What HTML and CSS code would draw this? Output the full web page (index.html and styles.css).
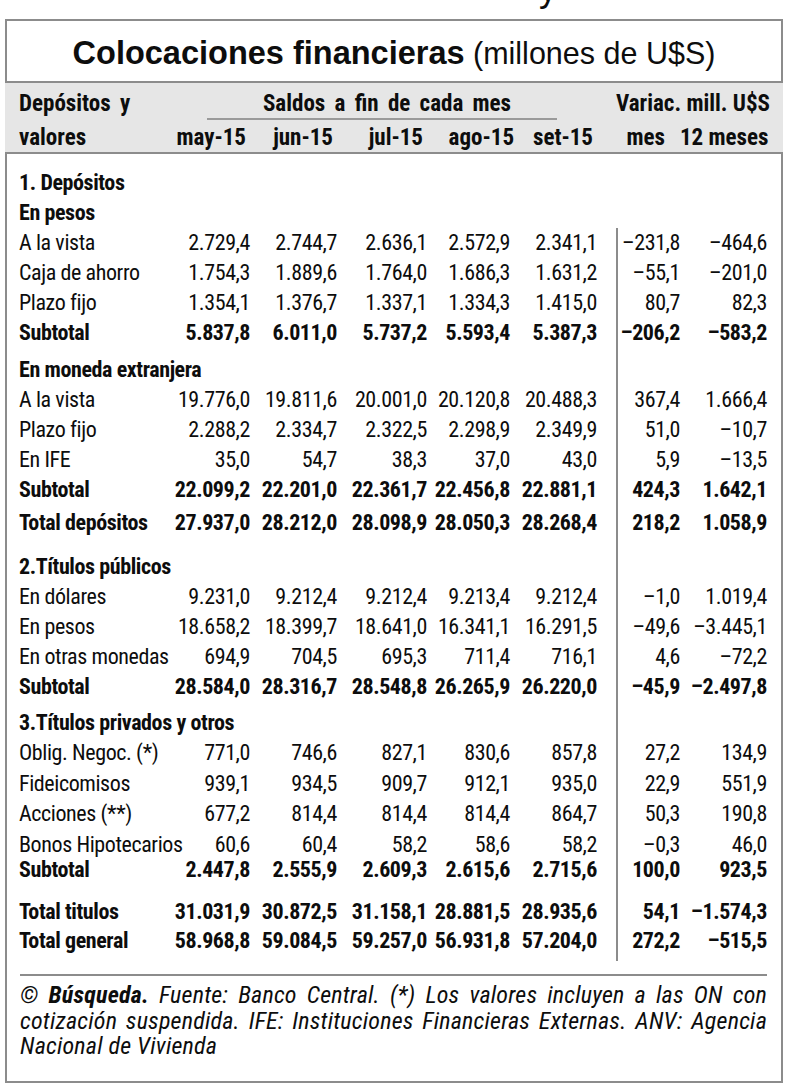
FILE: index.html
```html
<!DOCTYPE html>
<html lang="es">
<head>
  <meta charset="UTF-8">
  <meta name="viewport" content="width=device-width, initial-scale=1.0">
  <title>Colocaciones financieras</title>
  <link rel="stylesheet" href="styles.css">
</head>
<body>
  <div class="scrap"><span>y</span></div>

  <div class="chart">
    <h1 class="title"><b>Colocaciones financieras</b> (millones de U$S)</h1>

    <div class="head">
      <div class="grid top">
        <div class="lbl">Depósitos y</div>
        <div class="saldos"><span>Saldos a fin de cada mes</span></div>
        <div class="variac">Variac. mill. U$S</div>
      </div>
      <div class="grid bottom">
        <div class="lbl">valores</div>
        <div>may-15</div>
        <div>jun-15</div>
        <div>jul-15</div>
        <div class="ago">ago-15</div>
        <div class="v5">set-15</div>
        <div class="h-mes">mes</div>
        <div>12 meses</div>
      </div>
    </div>

    <div class="body">
      <div class="row bold"><div class="lbl full">1. Depósitos</div></div>
      <div class="row bold"><div class="lbl full">En pesos</div></div>
      <div class="row">
        <div class="lbl">A la vista</div><div>2.729,4</div><div>2.744,7</div><div>2.636,1</div><div>2.572,9</div><div class="v5">2.341,1</div><div class="mes">–231,8</div><div>–464,6</div>
      </div>
      <div class="row">
        <div class="lbl">Caja de ahorro</div><div>1.754,3</div><div>1.889,6</div><div>1.764,0</div><div>1.686,3</div><div class="v5">1.631,2</div><div class="mes">–55,1</div><div>–201,0</div>
      </div>
      <div class="row">
        <div class="lbl">Plazo fijo</div><div>1.354,1</div><div>1.376,7</div><div>1.337,1</div><div>1.334,3</div><div class="v5">1.415,0</div><div class="mes">80,7</div><div>82,3</div>
      </div>
      <div class="row bold">
        <div class="lbl">Subtotal</div><div>5.837,8</div><div>6.011,0</div><div>5.737,2</div><div>5.593,4</div><div class="v5">5.387,3</div><div class="mes">–206,2</div><div>–583,2</div>
      </div>

      <div class="row bold sp7"><div class="lbl wide">En moneda extranjera</div><div class="mes rest"></div></div>
      <div class="row">
        <div class="lbl">A la vista</div><div>19.776,0</div><div>19.811,6</div><div>20.001,0</div><div>20.120,8</div><div class="v5">20.488,3</div><div class="mes">367,4</div><div>1.666,4</div>
      </div>
      <div class="row">
        <div class="lbl">Plazo fijo</div><div>2.288,2</div><div>2.334,7</div><div>2.322,5</div><div>2.298,9</div><div class="v5">2.349,9</div><div class="mes">51,0</div><div>–10,7</div>
      </div>
      <div class="row">
        <div class="lbl">En IFE</div><div>35,0</div><div>54,7</div><div>38,3</div><div>37,0</div><div class="v5">43,0</div><div class="mes">5,9</div><div>–13,5</div>
      </div>
      <div class="row bold">
        <div class="lbl">Subtotal</div><div>22.099,2</div><div>22.201,0</div><div>22.361,7</div><div>22.456,8</div><div class="v5">22.881,1</div><div class="mes">424,3</div><div>1.642,1</div>
      </div>
      <div class="row bold sp3">
        <div class="lbl">Total depósitos</div><div>27.937,0</div><div>28.212,0</div><div>28.098,9</div><div>28.050,3</div><div class="v5">28.268,4</div><div class="mes">218,2</div><div>1.058,9</div>
      </div>

      <div class="row bold sp14"><div class="lbl wide">2.Títulos públicos</div><div class="mes rest"></div></div>
      <div class="row">
        <div class="lbl">En dólares</div><div>9.231,0</div><div>9.212,4</div><div>9.212,4</div><div>9.213,4</div><div class="v5">9.212,4</div><div class="mes">–1,0</div><div>1.019,4</div>
      </div>
      <div class="row">
        <div class="lbl">En pesos</div><div>18.658,2</div><div>18.399,7</div><div>18.641,0</div><div>16.341,1</div><div class="v5">16.291,5</div><div class="mes">–49,6</div><div>–3.445,1</div>
      </div>
      <div class="row">
        <div class="lbl">En otras monedas</div><div>694,9</div><div>704,5</div><div>695,3</div><div>711,4</div><div class="v5">716,1</div><div class="mes">4,6</div><div>–72,2</div>
      </div>
      <div class="row bold">
        <div class="lbl">Subtotal</div><div>28.584,0</div><div>28.316,7</div><div>28.548,8</div><div>26.265,9</div><div class="v5">26.220,0</div><div class="mes">–45,9</div><div>–2.497,8</div>
      </div>

      <div class="row bold sp6"><div class="lbl wide">3.Títulos privados y otros</div><div class="mes rest"></div></div>
      <div class="row">
        <div class="lbl">Oblig. Negoc. (*)</div><div>771,0</div><div>746,6</div><div>827,1</div><div>830,6</div><div class="v5">857,8</div><div class="mes">27,2</div><div>134,9</div>
      </div>
      <div class="row sp1">
        <div class="lbl">Fideicomisos</div><div>939,1</div><div>934,5</div><div>909,7</div><div>912,1</div><div class="v5">935,0</div><div class="mes">22,9</div><div>551,9</div>
      </div>
      <div class="row">
        <div class="lbl">Acciones (**)</div><div>677,2</div><div>814,4</div><div>814,4</div><div>814,4</div><div class="v5">864,7</div><div class="mes">50,3</div><div>190,8</div>
      </div>
      <div class="row sp1">
        <div class="lbl">Bonos Hipotecarios</div><div>60,6</div><div>60,4</div><div>58,2</div><div>58,6</div><div class="v5">58,2</div><div class="mes">–0,3</div><div>46,0</div>
      </div>
      <div class="row bold tight">
        <div class="lbl">Subtotal</div><div>2.447,8</div><div>2.555,9</div><div>2.609,3</div><div>2.615,6</div><div class="v5">2.715,6</div><div class="mes">100,0</div><div>923,5</div>
      </div>

      <div class="row bold sp17">
        <div class="lbl">Total titulos</div><div>31.031,9</div><div>30.872,5</div><div>31.158,1</div><div>28.881,5</div><div class="v5">28.935,6</div><div class="mes">54,1</div><div>–1.574,3</div>
      </div>
      <div class="row bold last">
        <div class="lbl">Total general</div><div>58.968,8</div><div>59.084,5</div><div>59.257,0</div><div>56.931,8</div><div class="v5">57.204,0</div><div class="mes">272,2</div><div>–515,5</div>
      </div>

      <div class="note">
        <p class="fill">© <b>Búsqueda.</b> Fuente: Banco Central. (*) Los valores incluyen a las ON con</p>
        <p class="fill">cotización suspendida. IFE: Instituciones Financieras Externas. ANV: Agencia</p>
        <p>Nacional de Vivienda</p>
      </div>
    </div>
  </div>
</body>
</html>
```

FILE: styles.css
```css
* {
  box-sizing: border-box;
}

body {
  margin: 0;
  background: #fff;
  color: #0d0d0d;
  font-family: "Roboto Condensed", "DejaVu Sans Condensed", sans-serif;
}

/* a bit of the line above, cut by the page edge */
.scrap {
  height: 19px;
  overflow: hidden;
  padding-left: 539px;
  font-family: "Liberation Sans", sans-serif;
  font-size: 36px;
  line-height: 36px;
}

.scrap span {
  display: block;
  margin-top: -29px;
}

.chart {
  width: 778px;
  margin-left: 5px;
}

.title {
  margin: 0;
  height: 64px;
  border: 2px solid #8c8c8c;
  padding-top: 4px;
  font-family: "Liberation Sans", sans-serif;
  font-size: 30.5px;
  font-weight: normal;
  line-height: 56px;
  text-align: center;
  white-space: nowrap;
}

.title b {
  font-size: 32.5px;
}

/* grey column header */
.head {
  background: #e6e6e6;
  padding: 6px 4px 0 14px;
  height: 69px;
  font-size: 23px;
  font-weight: bold;
}

.grid,
.row {
  display: grid;
  grid-template-columns: 141px 90px 87px 90px 83px 106px 64px 87px;
}

.grid > div,
.row > div {
  text-align: right;
  white-space: nowrap;
}

.grid > .lbl,
.row > .lbl {
  text-align: left;
}

.grid.top {
  line-height: 29px;
  word-spacing: 4px;
}

.saldos {
  grid-column: 2 / 7;
}

.saldos span {
  display: block;
  width: 350px;
  margin-left: 47px;
  padding-left: 10px;
  text-align: center;
  border-bottom: 2px solid #9a9a9a;
}

.grid.top > .variac {
  grid-column: 7 / 9;
  padding-right: 1px;
  word-spacing: 0;
}

.grid.bottom {
  line-height: 28px;
  padding-top: 4px;
}

.grid.bottom > div {
  padding-right: 4px;
}

.grid.bottom > .lbl {
  padding-right: 0;
}

.grid.bottom > .v5 {
  padding-right: 23px;
}

.grid.bottom > .ago {
  padding-right: 0;
  margin-right: -4px;
}

.grid.bottom > .h-mes {
  padding-right: 15px;
}

/* table body */
.body {
  border: 2px solid #8c8c8c;
  padding: 14px 14px 21px 12px;
  font-size: 22px;
  letter-spacing: -0.4px;
}

.row {
  line-height: 30px;
}

.row.bold {
  font-weight: bold;
}

.row > .full {
  grid-column: 1 / 9;
}

.row > .wide {
  grid-column: 1 / 7;
}

.row > .rest {
  grid-column: 7 / 9;
}

.row > .v5 {
  padding-right: 19px;
}

.row > .mes {
  border-left: 2px solid #8c8c8c;
}

.row.sp1 > div { padding-top: 1px; }
.row.sp3 > div { padding-top: 3px; }
.row.sp6 > div { padding-top: 6px; }
.row.sp7 > div { padding-top: 7px; }
.row.sp14 > div { padding-top: 14px; }
.row.sp17 > div { padding-top: 17px; }

.row.tight {
  line-height: 20px;
}

.row.last {
  line-height: 28px;
}

.row.last > div {
  padding-bottom: 6px;
}

.note {
  margin: 13px 0 0 1px;
  padding-top: 7px;
  border-top: 2px solid #8c8c8c;
  font-size: 24px;
  font-style: italic;
  letter-spacing: 0.2px;
  line-height: 25.5px;
}

.note p {
  margin: 0;
  white-space: nowrap;
}

.note p.fill {
  text-align: justify;
  text-align-last: justify;
}
```
